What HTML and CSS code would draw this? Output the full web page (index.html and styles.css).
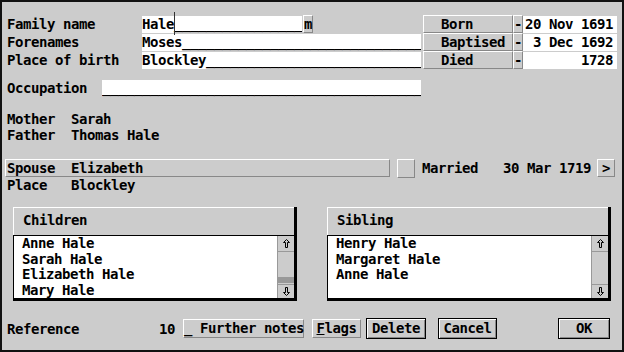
FILE: index.html
```html
<!DOCTYPE html>
<html lang="en">
<head>
  <meta charset="UTF-8">
  <title>Person record</title>
  <link rel="stylesheet" href="styles.css">
</head>
<body>
  <div class="window">
    <div class="caret"></div>

    <div class="top">
      <div class="person">
        <div class="row">
          <span class="label">Family name</span>
          <span class="field field-short">Hale________________</span>
          <span class="bevel mini">m</span>
        </div>
        <div class="row">
          <span class="label">Forenames</span>
          <span class="field field-long">Moses______________________________</span>
        </div>
        <div class="row">
          <span class="label">Place of birth</span>
          <span class="field field-long">Blockley___________________________</span>
        </div>
        <div class="row occupation">
          <span class="label label-occ">Occupation</span>
          <span class="field field-occ">________________________________________</span>
        </div>
      </div>

      <div class="events">
        <div class="event">
          <span class="bevel event-name">Born</span>
          <span class="bevel dash">-</span>
          <span class="date">20 Nov 1691</span>
        </div>
        <div class="event">
          <span class="bevel event-name">Baptised</span>
          <span class="bevel dash">-</span>
          <span class="date">3 Dec 1692</span>
        </div>
        <div class="event">
          <span class="bevel event-name">Died</span>
          <span class="bevel dash">-</span>
          <span class="date">1728</span>
        </div>
      </div>
    </div>

    <div class="parents">
      <div class="pair"><span class="key">Mother</span>Sarah</div>
      <div class="pair"><span class="key">Father</span>Thomas Hale</div>
    </div>

    <div class="marriage">
      <div class="spouse"><span class="key">Spouse</span>Elizabeth</div>
      <span class="bevel check"></span>
      <span class="married">Married</span>
      <span class="married-date">30 Mar 1719</span>
      <span class="bevel next">&gt;</span>
    </div>
    <div class="pair place"><span class="key">Place</span>Blockley</div>

    <div class="panels">
      <div class="panel">
        <div class="panel-title">Children</div>
        <div class="panel-body">
          <ul class="list">
            <li>Anne Hale</li>
            <li>Sarah Hale</li>
            <li>Elizabeth Hale</li>
            <li>Mary Hale</li>
          </ul>
          <div class="scrollbar">
            <div class="arrow arrow-up">
              <svg width="7" height="9" viewBox="0 0 7 9"><path d="M3.5 0.5 L6.5 3.5 L4.5 3.5 L4.5 8.5 L2.5 8.5 L2.5 3.5 L0.5 3.5 Z" fill="none" stroke="#000"/></svg>
            </div>
            <div class="track"><div class="slider"></div></div>
            <div class="arrow arrow-down">
              <svg width="7" height="9" viewBox="0 0 7 9"><path d="M3.5 8.5 L6.5 5.5 L4.5 5.5 L4.5 0.5 L2.5 0.5 L2.5 5.5 L0.5 5.5 Z" fill="none" stroke="#000"/></svg>
            </div>
          </div>
        </div>
      </div>

      <div class="panel">
        <div class="panel-title">Sibling</div>
        <div class="panel-body">
          <ul class="list">
            <li>Henry Hale</li>
            <li>Margaret Hale</li>
            <li>Anne Hale</li>
          </ul>
          <div class="scrollbar">
            <div class="arrow arrow-up">
              <svg width="7" height="9" viewBox="0 0 7 9"><path d="M3.5 0.5 L6.5 3.5 L4.5 3.5 L4.5 8.5 L2.5 8.5 L2.5 3.5 L0.5 3.5 Z" fill="none" stroke="#000"/></svg>
            </div>
            <div class="track"></div>
            <div class="arrow arrow-down">
              <svg width="7" height="9" viewBox="0 0 7 9"><path d="M3.5 8.5 L6.5 5.5 L4.5 5.5 L4.5 0.5 L2.5 0.5 L2.5 5.5 L0.5 5.5 Z" fill="none" stroke="#000"/></svg>
            </div>
          </div>
        </div>
      </div>
    </div>

    <div class="footer">
      <span class="ref-label">Reference</span>
      <span class="ref-num">10</span>
      <span class="bevel btn notes">_ Further notes</span>
      <span class="bevel btn flags"><u>F</u>lags</span>
      <span class="action delete">Delete</span>
      <span class="action cancel">Cancel</span>
      <span class="action ok">OK</span>
    </div>
  </div>
</body>
</html>
```

FILE: styles.css
```css
* {
  box-sizing: border-box;
}
body {
  margin: 0;
  background: #ccc;
}
.window {
  position: relative;
  width: 624px;
  height: 352px;
  border: 2px solid #111;
  background: #ccc;
  padding: 13px 5px 0 3px;
  font-family: "DejaVu Sans Mono", "Liberation Mono", monospace;
  font-weight: bold;
  font-size: 14px;
  letter-spacing: -0.43px;
  line-height: 16px;
  color: #000;
}
.caret {
  position: absolute;
  left: 172px;
  top: 10px;
  width: 1px;
  height: 23px;
  background: #333;
}
.bevel {
  background: #ccc;
  border: 1px solid;
  border-color: #fff #888 #888 #fff;
}

/* name fields and events */
.top {
  display: flex;
  gap: 2px;
}
.person {
  width: 416px;
}
.row {
  display: flex;
  height: 18px;
  line-height: 18px;
}
.label {
  width: 137px;
  padding-left: 2px;
}
.label-occ {
  width: 97px;
}
.field {
  display: block;
  height: 17px;
  margin-top: 1px;
  line-height: 17px;
  background: #fff;
  overflow: hidden;
  white-space: nowrap;
}
.field-short {
  width: 160px;
}
.field-long {
  width: 279px;
}
.field-occ {
  width: 319px;
}
.occupation {
  margin-top: 10px;
}
.mini {
  width: 10px;
  height: 18px;
  margin-left: 1px;
  line-height: 16px;
  text-align: center;
}
.events {
  width: 194px;
}
.event {
  display: flex;
  height: 18px;
}
.event-name {
  width: 90px;
  height: 18px;
  line-height: 16px;
  padding-left: 17px;
}
.dash {
  width: 10px;
  height: 18px;
  line-height: 16px;
  text-align: center;
}
.date {
  width: 94px;
  height: 17px;
  margin-top: 1px;
  line-height: 17px;
  padding-right: 4px;
  background: #fff;
  text-align: right;
}

/* parents, spouse */
.parents {
  margin-top: 14px;
}
.pair {
  padding-left: 2px;
}
.key {
  display: inline-block;
  width: 64px;
}
.marriage {
  display: flex;
  align-items: center;
  height: 18px;
  margin-top: 16px;
}
.spouse {
  width: 385px;
  height: 18px;
  padding-left: 1px;
  line-height: 16px;
  border: 1px solid;
  border-color: #fff #888 #888 #fff;
}
.check {
  width: 18px;
  height: 19px;
  margin-left: 7px;
}
.married {
  width: 81px;
  margin-left: 7px;
}
.married-date {
  width: 94px;
}
.next {
  width: 18px;
  height: 18px;
  line-height: 16px;
  text-align: center;
}

/* children / sibling lists */
.panels {
  display: flex;
  gap: 30px;
  margin-top: 14px;
  padding-left: 8px;
}
.panel {
  width: 284px;
  border-right: 3px solid #000;
  border-bottom: 3px solid #000;
}
.panel-title {
  height: 28px;
  padding: 4px 0 0 9px;
  border-top: 1px solid #fff;
  border-left: 1px solid #fff;
}
.panel-body {
  display: flex;
  height: 63px;
  border-top: 1px solid #000;
  border-left: 1px solid #000;
  background: #fff;
}
.list {
  flex: 1;
  margin: 0;
  padding: 0 0 0 8px;
  list-style: none;
  line-height: 15.7px;
}
.scrollbar {
  width: 17px;
  display: flex;
  flex-direction: column;
  background: #ccc;
  border-left: 1px solid #999;
}
.arrow {
  display: flex;
  align-items: center;
  justify-content: center;
}
.arrow-up {
  height: 16px;
  border-bottom: 1px solid #999;
}
.arrow-down {
  height: 14px;
  border-top: 1px solid #999;
  align-items: flex-start;
  padding-top: 2px;
}
.track {
  flex: 1;
  display: flex;
  flex-direction: column;
  justify-content: flex-end;
}
.slider {
  height: 6px;
  margin-bottom: 1px;
  background: #999;
}

/* footer buttons */
.footer {
  display: flex;
  align-items: center;
  height: 21px;
  margin-top: 17px;
}
.ref-label {
  width: 154px;
  padding-left: 2px;
}
.ref-num {
  width: 24px;
}
.btn {
  height: 19px;
  line-height: 17px;
  text-align: center;
}
.notes {
  width: 121px;
  text-align: left;
  white-space: nowrap;
}
.flags {
  width: 49px;
  margin-left: 8px;
}
.action {
  height: 21px;
  line-height: 19px;
  text-align: center;
  background: #ccc;
  border: 1px solid #000;
  box-shadow: inset 1px 1px #fff, inset -1px -1px #888;
}
.delete {
  width: 60px;
  margin-left: 5px;
}
.cancel {
  width: 59px;
  margin-left: 12px;
}
.ok {
  width: 52px;
  margin-left: 61px;
}
```
